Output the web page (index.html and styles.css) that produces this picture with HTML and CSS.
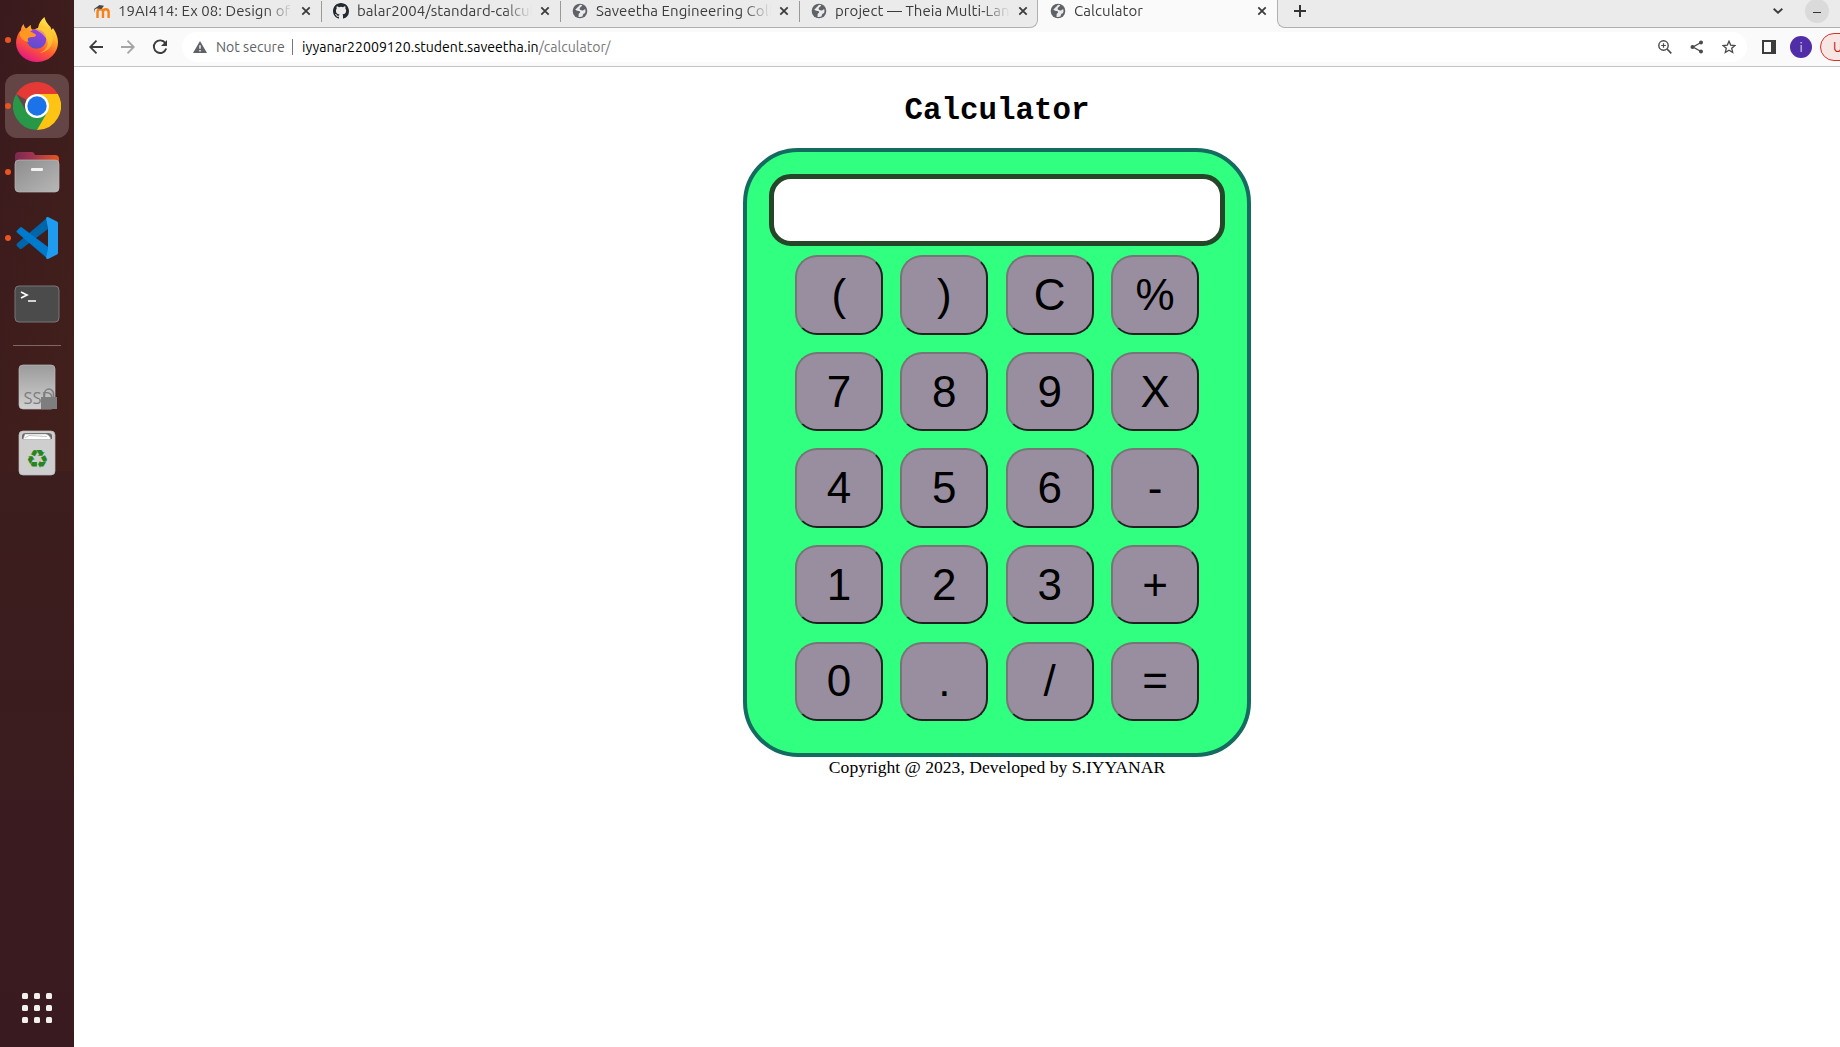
FILE: index.html
```html
<!DOCTYPE html>
<html lang="en">
<head>
<meta charset="utf-8">
<title>Calculator</title>
<link rel="stylesheet" href="styles.css">
</head>
<body>
<svg class="defs" aria-hidden="true">
  <symbol id="close" viewBox="0 0 10 10"><path d="M1.3 1.3l7.4 7.4M8.7 1.3L1.3 8.7" fill="none" stroke="#3c3c3c" stroke-width="1.8"/></symbol>
  <symbol id="globe" viewBox="0 0 16 16"><circle cx="8" cy="8" r="7.3" fill="#5f6368"/><path d="M8.6 1.8C6.7 2 7 4 5.4 4.4 4.3 4.7 4.8 6 3.2 6.2c1 1.6 3.2 1.5 4 1.9 1.2.5 1.3 2.2-.3 2.5-.6.7 0 2-.5 3.2 1.7.5 3.300.1 4.300-.6 0-1.500.7-2.700 2.200-2.900.7-1.400.8-3 .3-4.100-1.500.3-1.500 1.500-2.900 1.200-1.200-.3-2.600-.6-2.700-1.700C7.500 4.300 9.800 4 10.200 2.300z" fill="#ebebeb"/></symbol>
</svg>
<div class="desktop">
  <aside class="dock">
    <div class="app running"><svg width="44" height="46" viewBox="0 0 44 46">
      <defs><linearGradient id="ff" x1=".8" y1="0" x2=".3" y2="1"><stop offset="0" stop-color="#fff44f"/><stop offset=".35" stop-color="#ffb52a"/><stop offset=".65" stop-color="#ff5a30"/><stop offset="1" stop-color="#e31587"/></linearGradient>
      <linearGradient id="ffg" x1=".7" y1="0" x2=".4" y2="1"><stop offset="0" stop-color="#a43be8"/><stop offset="1" stop-color="#5950c4"/></linearGradient></defs>
      <path d="M6 13c0-2 1-4 2.500-6 .5 2 1 3 2.500 4.500C13 10.500 14 9 16 8c-.5 2 0 3 1 4.500 3 .2 4.500-.5 6-1.500 1-5 3-8 6.500-11 1 5 3.500 7 6 10l1 3 1.500-2c4 6 5 11 5 14a21 19.500 0 0 1-42 1C1 21 3 16 6 13z" fill="url(#ff)"/>
      <circle cx="21.500" cy="22" r="9.800" fill="url(#ffg)"/>
      <path d="M5 15c5-2 9-2 15 2 2 1 1 3-3 3-5 0-5 3-3 5-7-1-10-5-9-10z" fill="#ff9722"/>
      <path d="M20 12c7-3 15 0 17 6 3 9-4 17-12 18 9-4 10-12 4-17-2-3-5-4-9-7z" fill="#ffcf35" opacity=".65"/>
    </svg></div>
    <div class="app running active"><svg width="48" height="48" viewBox="0 0 48 48">
      <path d="M24 24L3.200 12A24 24 0 0 1 44.800 12z" fill="#e53935"/><path d="M24 24V12h20.800A24 24 0 0 1 24 48z" fill="#fdc413"/><path d="M3.200 12A24 24 0 0 0 24 48l10.400-18L24 24l-10.400 6z" fill="#279847"/>
      <circle cx="24" cy="24" r="12" fill="#fff"/><circle cx="24" cy="24" r="9.700" fill="#1a73e8"/></svg></div>
    <div class="app running"><svg width="46" height="42" viewBox="0 0 46 42">
      <defs><linearGradient id="fold"><stop stop-color="#7b2951"/><stop offset=".4" stop-color="#a03550"/><stop offset="1" stop-color="#e95420"/></linearGradient><linearGradient id="gray" x2="1" y2="1"><stop stop-color="#8d8d8d"/><stop offset="1" stop-color="#b7b7b7"/></linearGradient></defs>
      <path d="M1 5q0-4 4-4h13q2 0 3 3h20q4 0 4 4v10H1z" fill="url(#fold)"/><rect x="1" y="9" width="44" height="32" rx="4" fill="url(#gray)" stroke="#b9b9b9" stroke-width=".7"/><rect x="17" y="17" width="12" height="3" rx="1" fill="#f2f2f2"/></svg></div>
    <div class="app running"><svg width="42" height="42" viewBox="0 0 42 42"><path d="M0 28l3.700 3.800q1 .6 2 0L32 12V0L1 26.500q-1 1 0 2z" fill="#0065a9"/><path d="M1 15.500q-1-1 0-2l3-3q1-.8 2 0L32 30v12L1 15.500z" fill="#007acc"/><path d="M32 42q-1 .2-2-1l2-9V11L30 1q1-1.200 2-1l9 4.500q1 .5 1 1.500v30q0 1-1 1.500z" fill="#1f9cf0"/></svg></div>
    <div class="app"><svg width="46" height="38" viewBox="0 0 46 38"><rect x="1" y="1" width="44" height="36" rx="4" fill="#4b4b4b" stroke="#777" stroke-width="1"/><path d="M7 7l6 3-6 3M14 16h8" fill="none" stroke="#fff" stroke-width="1.700"/></svg></div>
    <hr class="dock-line">
    <div class="app disk"><svg width="40" height="46" viewBox="0 0 40 46"><defs><linearGradient id="ssd" x2="0" y2="1"><stop stop-color="#9b9b9b"/><stop offset="1" stop-color="#d1d1d1"/></linearGradient></defs><rect x="2" y="1" width="36" height="44" rx="4" fill="url(#ssd)" stroke="#bbb" stroke-width=".7"/><text x="6.500" y="40" class="ssd">SSD</text></svg>
      <svg class="lock" width="16" height="21" viewBox="0 0 16 21"><path d="M3.500 10V6a4.500 5 0 0 1 9 0v4" fill="none" stroke="#7e7e7e" stroke-width="1.600"/><path d="M0 9h16v12H0z" fill="#7e7e7e"/></svg></div>
    <div class="app"><svg width="38" height="46" viewBox="0 0 38 46"><rect x="1" y="1" width="36" height="44" rx="4" fill="#cecece" stroke="#bbb" stroke-width=".7"/><path d="M4 9V6q0-3 4-3h22q4 0 4 3v3z" fill="#6c6c6c"/><path d="M5 9.500l2-5.500h21q4 1 5 5.500z" fill="#fff" stroke="#999" stroke-width=".5"/><path d="M7 8l4-2.500 18 1" fill="none" stroke="#aaa" stroke-width=".7"/><text x="19.300" y="37.500" class="recycle">♻</text></svg></div>
    <div class="launcher"><i></i><i></i><i></i><i></i><i></i><i></i><i></i><i></i><i></i></div>
  </aside>
  <div class="browser">
    <header class="tabs">
      <div class="tab first"><svg class="fav" width="16" height="16" viewBox="0 0 16 16"><path d="M3.500 15V9q0-2.800 2.800-2.800T9 9v6M9 9q0-2.800 2.800-2.800T14.600 9v6" fill="none" stroke="#f98012" stroke-width="2.400"/><path d="M0 6l5.500-4 4.500.8L7.500 6 2.500 5.500.8 6.500V10z" fill="#4a4848"/></svg><span class="tt">19AI414: Ex 08: Design of a</span><svg class="x"><use href="#close"/></svg></div>
      <div class="tab"><svg class="fav" width="16" height="16" viewBox="0 0 16 16"><path fill="#24292f" d="M8 0C3.580 0 0 3.580 0 8c0 3.540 2.290 6.530 5.470 7.590.4.070.55-.17.55-.38 0-.19-.01-.82-.01-1.490-2.010.37-2.530-.49-2.690-.94-.09-.23-.48-.94-.82-1.130-.28-.15-.68-.52-.01-.53.63-.01 1.080.58 1.230.82.72 1.210 1.870.87 2.330.66.070-.52.28-.87.510-1.070-1.780-.2-3.640-.89-3.640-3.950 0-.87.310-1.590.82-2.150-.08-.2-.36-1.020.08-2.120 0 0 .67-.21 2.200.82a7.400 7.400 0 0 1 4 0c1.530-1.040 2.200-.82 2.200-.82.44 1.100.16 1.920.08 2.120.51.56.82 1.270.82 2.150 0 3.070-1.870 3.750-3.650 3.950.29.25.54.73.54 1.480 0 1.070-.01 1.930-.01 2.200 0 .21.15.46.55.38A8.010 8.010 0 0 0 16 8c0-4.420-3.580-8-8-8z"/></svg><span class="tt">balar2004/standard-calcul</span><svg class="x"><use href="#close"/></svg></div>
      <div class="tab"><svg class="fav"><use href="#globe"/></svg><span class="tt">Saveetha Engineering Coll</span><svg class="x"><use href="#close"/></svg></div>
      <div class="tab before"><svg class="fav"><use href="#globe"/></svg><span class="tt">project — Theia Multi-Lang</span><svg class="x"><use href="#close"/></svg></div>
      <div class="tab current"><svg class="fav"><use href="#globe"/></svg><span class="tt">Calculator</span><svg class="x"><use href="#close"/></svg></div>
      <div class="strip"><svg width="12" height="12" viewBox="0 0 12 12"><path d="M6 0v12M0 6h12" stroke="#333" stroke-width="2"/></svg><svg class="chev" width="10" height="6" viewBox="0 0 10 6"><path d="M.7.7L5 4.700 9.300.7" fill="none" stroke="#3c3c3c" stroke-width="1.900"/></svg><div class="mini"></div></div>
    </header>
    <nav class="toolbar">
      <svg width="14" height="14" viewBox="0 0 14 14"><path d="M14 7H1M7.500.7L1.200 7l6.300 6.300" fill="none" stroke="#3c3c3c" stroke-width="1.800"/></svg>
      <svg width="14" height="14" viewBox="0 0 14 14"><path d="M0 7h13M6.500.7L12.800 7l-6.300 6.300" fill="none" stroke="#a5a5a5" stroke-width="1.800"/></svg>
      <svg width="16" height="16" viewBox="0 0 16 16"><path d="M13.300 4A6.300 6.300 0 1 0 14.200 9.500" fill="none" stroke="#3c3c3c" stroke-width="1.900"/><path d="M15 1v6H9z" fill="#3c3c3c"/></svg>
      <div class="address"><svg width="14" height="12" viewBox="0 0 14 12"><path d="M7 0l7 12H0z" fill="#5f6368"/><path d="M7 4.300v3.500M7 9v1.600" stroke="#fff" stroke-width="1.400"/></svg><span class="secure">Not secure</span><span class="url"><b>iyyanar22009120.student.saveetha.in</b><em>/calculator/</em></span>
        <div class="actions"><svg width="14" height="14" viewBox="0 0 14 14"><circle cx="5.500" cy="5.500" r="4.700" fill="none" stroke="#4a4a4a" stroke-width="1.400"/><path d="M5.500 3.200v4.600M3.200 5.500h4.600" stroke="#4a4a4a" stroke-width="1.200"/><path d="M9 9l4.300 4.300" stroke="#4a4a4a" stroke-width="1.700"/></svg>
        <svg width="14" height="14" viewBox="0 0 14 14"><path d="M11 2.500L3 7l8 4.500" fill="none" stroke="#4a4a4a" stroke-width="1.400"/><g fill="#4a4a4a"><circle cx="11" cy="2.400" r="2"/><circle cx="2.500" cy="7" r="2"/><circle cx="11" cy="11.600" r="2"/></g></svg>
        <svg width="14" height="14" viewBox="0 0 14 14"><path d="M7 1.200l1.700 3.900 4.200.4-3.200 2.800 1 4.200L7 10.300l-3.700 2.200 1-4.200L1.100 5.500l4.200-.4z" fill="none" stroke="#4a4a4a" stroke-width="1.300"/></svg></div>
      </div>
      <svg class="panel" width="14" height="14" viewBox="0 0 14 14"><path d="M0 0h14v14H0zM2 2v10h7V2z" fill="#3c3c3c" fill-rule="evenodd"/></svg>
      <div class="avatar">i</div><div class="update">Update</div>
    </nav>
    <main class="page">
      <h1>Calculator</h1>
      <section class="calc"><div class="screen"></div>
        <div class="keys"><button>(</button><button>)</button><button>C</button><button>%</button><button>7</button><button>8</button><button>9</button><button>X</button><button>4</button><button>5</button><button>6</button><button>-</button><button>1</button><button>2</button><button>3</button><button>+</button><button>0</button><button>.</button><button>/</button><button>=</button></div>
      </section>
      <footer>Copyright @ 2023, Developed by S.IYYANAR</footer>
    </main>
  </div>
</div>
</body>
</html>
```
FILE: styles.css
```css
* { box-sizing: border-box; }
body { margin: 0; background: #fff; overflow: hidden; }
svg { display: block; flex: none; }
.defs { position: absolute; width: 0; height: 0; }
.desktop { display: flex; height: 1047px; width: 1840px; overflow: hidden; }

.dock { width: 74px; flex: none; height: 1047px; padding-top: 8px; display: flex; flex-direction: column; align-items: center; gap: 2px; background: linear-gradient(100deg, #3b1a1e, #42201b) 0 0 / 100% 45% no-repeat, linear-gradient(#40201b, #391a20); }
.app { width: 64px; height: 64px; flex: none; display: flex; align-items: center; justify-content: center; border-radius: 12px; position: relative; }
.app.active { background: #624544; }
.app.running::before { content: ""; position: absolute; left: 0; top: 29px; width: 6px; height: 6px; border-radius: 50%; background: #e95420; }
.dock-line { width: 48px; height: 1px; border: 0; margin: 7px 0; background: #806761; flex: none; }
.ssd { font: 16.500px "Open Sans", sans-serif; fill: #7e7e7e; }
.recycle { font: 26px "DejaVu Sans", sans-serif; fill: #26861d; text-anchor: middle; }
.lock { position: absolute; left: 36px; top: 33px; }
.launcher { display: grid; grid-template-columns: repeat(3, 6px); gap: 6px; margin: auto 0 24px; }
.launcher i { width: 6px; height: 6px; border-radius: 1.500px; background: #f2f1ee; }

.browser { flex: 1; min-width: 0; display: flex; flex-direction: column; font-family: Ubuntu, "Noto Sans", sans-serif; }
.tabs { height: 28px; flex: none; display: flex; background: #fafafa; }
.tab { width: 239px; height: 28px; padding: 0 11px 6px; display: flex; align-items: center; background: #ebebeb; border-bottom: 1px solid #b0b0b0; position: relative; }
.tab.first { width: 248px; padding-left: 20px; }
.tab:not(.before):not(.current)::after { content: ""; position: absolute; right: 0; top: 1px; width: 1px; height: 21px; background: #999; }
.tab.before { width: 238px; border-right: 1px solid #b0b0b0; border-radius: 0 0 8px 0; padding-right: 9px; }
.tab.current { background: #fafafa; border-bottom-color: #fafafa; padding-left: 12px; padding-right: 10px; }
.fav { width: 16px; height: 16px; margin-right: 8px; }
.tab .x { width: 10px; height: 10px; margin-left: auto; }
.tt { width: 175px; overflow: hidden; white-space: nowrap; font-size: 15px; letter-spacing: .06px; line-height: 22px; color: #3c3c3c; -webkit-mask-image: linear-gradient(90deg, #000 84%, transparent); mask-image: linear-gradient(90deg, #000 84%, transparent); }
.strip { flex: 1; background: #ebebeb; border-bottom: 1px solid #b0b0b0; border-left: 1px solid #b0b0b0; border-radius: 0 0 0 8px; display: flex; align-items: center; padding: 0 11px 6px 16px; }
.chev { margin-left: auto; margin-right: 22px; }
.mini { width: 24px; height: 24px; border-radius: 50%; background: #dadada; display: flex; align-items: center; justify-content: center; }
.mini::before { content: ""; width: 8px; height: 1px; background: #333; margin-top: 4px; }

.toolbar { height: 39px; flex: none; display: flex; align-items: center; gap: 18px; padding: 0 0 0 15px; background: #fafafa; border-bottom: 1px solid #c4c4c4; }
.toolbar > svg:nth-child(3) { margin-left: -1px; }
.address { width: 1565px; height: 30px; flex: none; margin-left: -4px; border-radius: 15px; background: #fff; display: flex; align-items: center; padding: 0 11px; font-size: 14.100px; }
.secure { color: #5f6368; margin-left: 9px; width: 77px; height: 16px; line-height: 16px; border-right: 1px solid #777; white-space: nowrap; }
.url { margin-left: 9px; white-space: nowrap; color: #000; }
.url b { font-weight: 400; }
.url em { font-style: normal; color: #777; }
.actions { margin-left: auto; display: flex; gap: 18px; }
.panel { margin-left: -3px; }
.avatar { width: 22px; height: 22px; flex: none; border-radius: 50%; background: #512da8; color: #ddd; font-size: 13px; line-height: 22px; text-align: center; margin-left: -4px; }
.update { width: 86px; height: 28px; flex: none; margin-left: -10px; padding-left: 12px; border: 1px solid #d93025; border-radius: 14px; background: #f8e6e5; color: #c5221f; font-size: 14px; line-height: 26px; }

/* The window is wider than the visible desktop, so its page centres further right. */
.page { flex: 1; width: 1846px; display: flex; flex-direction: column; align-items: center; }
h1 { margin: 26px 0 19px; font: bold 30.800px/36px "Liberation Mono", monospace; }
.calc { width: 508px; height: 609px; border: 4px solid #146b5f; border-radius: 55px; background: #30ff80; padding-top: 22px; display: flex; flex-direction: column; align-items: center; }
.screen { width: 456px; height: 72px; flex: none; border: 5px solid #254628; border-radius: 22px; background: #fff; }
.keys { margin-top: 9.300px; display: grid; grid-template-columns: repeat(4, 88px); grid-auto-rows: 79.300px; column-gap: 17.400px; row-gap: 17.300px; }
button { padding: 0; border: 2px solid; border-color: #767676 #212121 #212121 #767676; border-radius: 22px; background: #988e9f; color: #000; font: 44px/1 "Liberation Sans", Arial, sans-serif; }
footer { font: 17.600px/20px "Liberation Serif", serif; color: #000; }
```
